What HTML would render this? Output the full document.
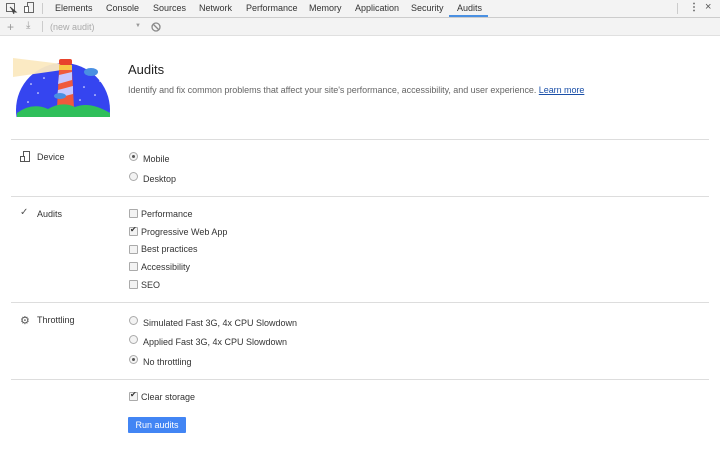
<!DOCTYPE html><html><head><style>
body{margin:0;width:720px;height:453px;background:#fff;font-family:"Liberation Sans",sans-serif;position:relative;overflow:hidden;color:#333}
.a{position:absolute;white-space:nowrap}
.t{font-size:9px;color:#333}
.hr{position:absolute;left:11px;width:698px;height:1px;background:#ddd}
.lab{font-size:9px;color:#333}
.rb{position:absolute;width:7px;height:7px;border:1px solid #aaa;border-radius:50%;background:#f3f3f3}
.cb{position:absolute;width:7px;height:7px;border:1px solid #aaa;border-radius:1px;background:#f3f3f3}
</style></head><body>
<div class="a" style="left:0;top:0;width:720px;height:17px;background:#f3f3f3;border-bottom:1px solid #ccc"></div>
<div class="a" style="left:0;top:18px;width:720px;height:17px;background:#f3f3f3;border-bottom:1px solid #e0e0e0"></div>
<svg class="a" style="left:6px;top:3px" width="12" height="11"><rect x="0.5" y="0.5" width="8" height="8" fill="none" stroke="#666"/><path d="M4 4 L10 9 L7 9 L8 11" stroke="#444" fill="#444"/></svg>
<svg class="a" style="left:24px;top:2px" width="12" height="12"><rect x="3.5" y="0.5" width="6" height="10" fill="none" stroke="#666"/><rect x="0.5" y="4.5" width="4" height="6" fill="#fff" stroke="#666"/></svg>
<div class="a" style="left:42px;top:3px;width:1px;height:11px;background:#ccc"></div>
<div class="a t" style="left:55px;top:3px">Elements</div>
<div class="a t" style="left:106px;top:3px">Console</div>
<div class="a t" style="left:153px;top:3px">Sources</div>
<div class="a t" style="left:199px;top:3px">Network</div>
<div class="a t" style="left:246px;top:3px">Performance</div>
<div class="a t" style="left:309px;top:3px">Memory</div>
<div class="a t" style="left:355px;top:3px">Application</div>
<div class="a t" style="left:411px;top:3px">Security</div>
<div class="a t" style="left:457px;top:3px">Audits</div>
<div class="a" style="left:449px;top:15px;width:39px;height:2px;background:#4a90e2"></div>
<div class="a" style="left:677px;top:3px;width:1px;height:11px;background:#ccc"></div>
<div class="a" style="left:689px;top:2px;font-size:10px;color:#555;font-weight:bold">⋮</div>
<div class="a" style="left:705px;top:1px;font-size:11px;color:#555">×</div>
<div class="a" style="left:7px;top:20px;font-size:12px;color:#999">+</div>
<div class="a" style="left:26px;top:20px;font-size:10px;color:#999">⤓</div>
<div class="a" style="left:42px;top:21px;width:1px;height:11px;background:#ccc"></div>
<div class="a" style="left:50px;top:22px;font-size:9px;color:#aaa">(new audit)</div>
<div class="a" style="left:135px;top:23px;font-size:6px;color:#999">▼</div>
<svg class="a" style="left:151px;top:22px" width="10" height="10"><circle cx="5" cy="5" r="4" fill="none" stroke="#888" stroke-width="1.3"/><path d="M2 2 L8 8" stroke="#888" stroke-width="1.3"/></svg>
<svg class="a" style="left:0;top:50px" width="120" height="67">
<circle cx="63" cy="60" r="47" fill="#3545f0"/>
<path d="M13 8 L62 14 L62 20 L13 27 Z" fill="#fbe9c0" opacity="0.95"/>
<rect x="59" y="9" width="13" height="6" fill="#e8442c" rx="2"/>
<rect x="59" y="15" width="13" height="5" fill="#f7c948"/>
<path d="M59 20 L72 20 L74 58 L57 58 Z" fill="#ef5a3c"/>
<path d="M59 25 L72 22 L72 30 L58 34 Z M58 40 L73 36 L73 44 L57 48 Z" fill="#c6c8ff"/>
<ellipse cx="91" cy="22" rx="7" ry="4" fill="#4a90e2"/>
<ellipse cx="60" cy="46" rx="6" ry="3" fill="#4a90e2"/>
<g fill="#fff"><circle cx="31" cy="34" r="0.8"/><circle cx="38" cy="43" r="0.8"/><circle cx="44" cy="28" r="0.8"/><circle cx="28" cy="52" r="0.8"/><circle cx="84" cy="37" r="0.8"/><circle cx="95" cy="45" r="0.8"/><circle cx="100" cy="31" r="0.8"/><circle cx="80" cy="50" r="0.8"/></g>
<path d="M17 63 Q32 52 48 59 Q62 51 75 57 Q90 51 110 63 L110 67 L17 67 Z" fill="#2fbf5a"/>
</svg>
<div class="a" style="left:128px;top:62px;font-size:13px;color:#222">Audits</div>
<div class="a" style="left:128px;top:85px;font-size:9px;color:#666;letter-spacing:-0.05px">Identify and fix common problems that affect your site's performance, accessibility, and user experience. <span style="color:#1a4fa8;text-decoration:underline">Learn more</span></div>
<div class="hr" style="top:139px"></div>
<div class="hr" style="top:196px"></div>
<div class="hr" style="top:302px"></div>
<div class="hr" style="top:379px"></div>
<svg class="a" style="left:20px;top:151px" width="10" height="12"><rect x="3.5" y="0.5" width="6" height="10" fill="none" stroke="#555"/><rect x="0.5" y="5.5" width="4" height="5" fill="#fff" stroke="#555"/></svg>
<div class="a lab" style="left:37px;top:152px">Device</div>
<div class="a lab" style="left:37px;top:209px">Audits</div>
<div class="a" style="left:20px;top:207px;font-size:10px;color:#555">✓</div>
<div class="a" style="left:20px;top:314px;font-size:11px;color:#555">⚙</div>
<div class="a lab" style="left:37px;top:315px">Throttling</div>
<div class="rb" style="left:129px;top:152px"></div><div class="a" style="left:132px;top:155px;width:3px;height:3px;border-radius:50%;background:#555"></div>
<div class="a lab" style="left:143px;top:154px">Mobile</div>
<div class="rb" style="left:129px;top:172px"></div><div class="a lab" style="left:143px;top:174px">Desktop</div>
<div class="cb" style="left:129px;top:209px"></div><div class="a lab" style="left:141px;top:209px">Performance</div>
<div class="cb" style="left:129px;top:227px"></div><div class="a" style="left:130px;top:225px;font-size:8px;color:#333">✔</div><div class="a lab" style="left:141px;top:227px">Progressive Web App</div>
<div class="cb" style="left:129px;top:245px"></div><div class="a lab" style="left:141px;top:244px">Best practices</div>
<div class="cb" style="left:129px;top:262px"></div><div class="a lab" style="left:141px;top:262px">Accessibility</div>
<div class="cb" style="left:129px;top:280px"></div><div class="a lab" style="left:141px;top:280px">SEO</div>
<div class="rb" style="left:129px;top:316px"></div><div class="a lab" style="left:143px;top:318px">Simulated Fast 3G, 4x CPU Slowdown</div>
<div class="rb" style="left:129px;top:335px"></div><div class="a lab" style="left:143px;top:337px">Applied Fast 3G, 4x CPU Slowdown</div>
<div class="rb" style="left:129px;top:355px"></div><div class="a" style="left:132px;top:358px;width:3px;height:3px;border-radius:50%;background:#555"></div><div class="a lab" style="left:143px;top:357px">No throttling</div>
<div class="cb" style="left:129px;top:392px"></div><div class="a" style="left:130px;top:390px;font-size:8px;color:#333">✔</div><div class="a lab" style="left:141px;top:392px">Clear storage</div>
<div class="a" style="left:128px;top:417px;width:58px;height:16px;background:#4285f4;color:#fff;font-size:9px;line-height:16px;text-align:center;border-radius:1px">Run audits</div>
</body></html>
